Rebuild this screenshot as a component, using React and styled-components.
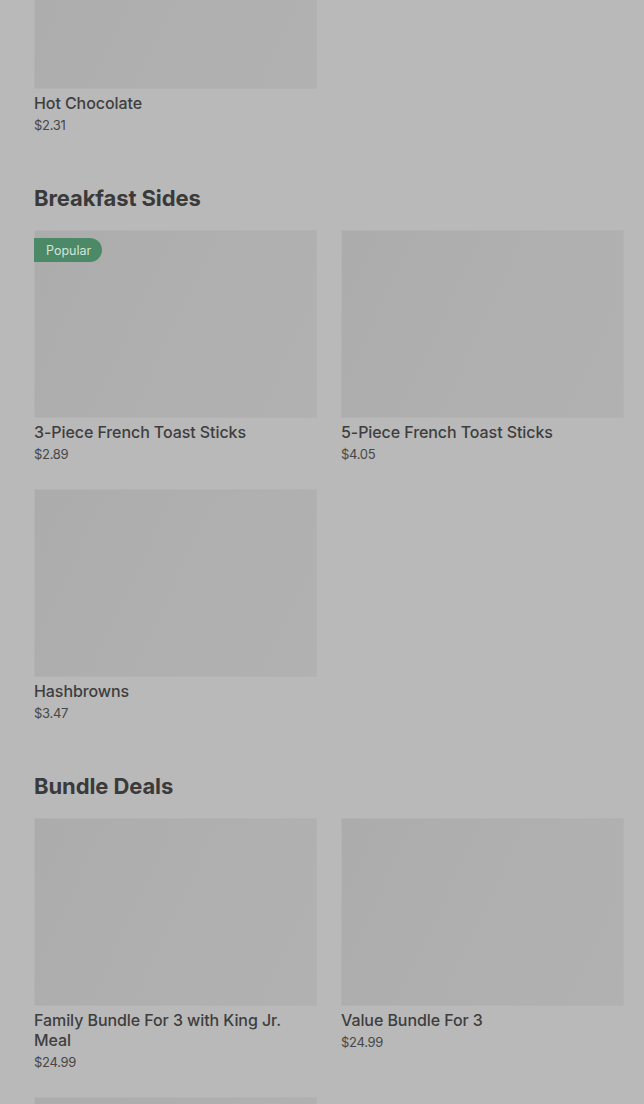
import styled, { createGlobalStyle } from "styled-components";

const Global = createGlobalStyle`
  html, body {
    margin: 0;
    padding: 0;
    background: #b9b9b9;
    overflow: hidden;
  }
  body {
    font-family: Inter, "Liberation Sans", sans-serif;
  }
`;

// the page is scrolled, first card image starts above the top edge
const Page = styled.div`
  padding: 0 20px 0 34px;
  margin-top: -99px;
`;

const Section = styled.section`
  & + & {
    margin-top: 49px;
  }
`;

const Heading = styled.h2`
  margin: 0 0 18px;
  font-size: 22px;
  line-height: 28px;
  font-weight: 700;
  letter-spacing: -0.1px;
  color: #3a3a3a;
`;

const Grid = styled.div`
  display: grid;
  grid-template-columns: repeat(2, 283px);
  column-gap: 24px;
  row-gap: 25px;
`;

const Card = styled.div`
  display: flex;
  flex-direction: column;
`;

const Thumb = styled.div`
  position: relative;
  height: 188px;
  box-sizing: border-box;
  border: 1px solid #b3b3b3;
  background: linear-gradient(115deg, #acacac 0%, #afafaf 45%, #b1b1b1 100%);
`;

const Badge = styled.span`
  position: absolute;
  top: 7px;
  left: -1px;
  height: 24px;
  padding: 0 11px 0 12px;
  display: flex;
  align-items: center;
  background: #4c8a67;
  color: #d3e4d9;
  font-size: 12.5px;
  border-radius: 0 12px 12px 0;
`;

const Name = styled.div`
  margin-top: 4px;
  font-size: 16px;
  line-height: 20px;
  font-weight: 500;
  letter-spacing: -0.08px;
  color: #3e3e3e;
`;

const Price = styled.div`
  margin-top: 2px;
  font-size: 13px;
  line-height: 20px;
  letter-spacing: -0.3px;
  color: #474747;
`;

const sections = [
  { title: null, items: [{ name: "Hot Chocolate", price: "$2.31" }] },
  {
    title: "Breakfast Sides",
    items: [
      { name: "3-Piece French Toast Sticks", price: "$2.89", popular: true },
      { name: "5-Piece French Toast Sticks", price: "$4.05" },
      { name: "Hashbrowns", price: "$3.47" },
    ],
  },
  {
    title: "Bundle Deals",
    items: [
      { name: "Family Bundle For 3 with King Jr. Meal", price: "$24.99" },
      { name: "Value Bundle For 3", price: "$24.99" },
      { name: "Bundle", price: "$19.99" },
    ],
  },
];

export default function App() {
  return (
    <>
      <Global />
      <Page>
        {sections.map((s, i) => (
          <Section key={i}>
            {s.title && <Heading>{s.title}</Heading>}
            <Grid>
              {s.items.map((item, j) => (
                <Card key={j}>
                  <Thumb>{item.popular && <Badge>Popular</Badge>}</Thumb>
                  <Name>{item.name}</Name>
                  <Price>{item.price}</Price>
                </Card>
              ))}
            </Grid>
          </Section>
        ))}
      </Page>
    </>
  );
}
